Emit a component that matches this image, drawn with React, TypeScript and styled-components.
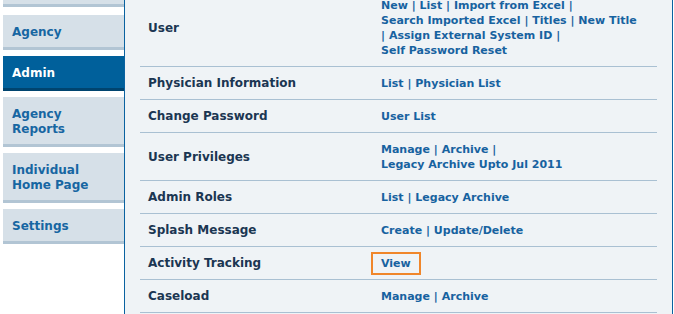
import React from 'react';
import styled, { createGlobalStyle, css } from 'styled-components';

const GlobalStyle = createGlobalStyle`
  html, body {
    margin: 0;
    padding: 0;
    background: #ffffff;
    overflow: hidden;
  }
  body {
    font-family: "DejaVu Sans", Verdana, sans-serif;
  }
`;

const Page = styled.div`
  display: flex;
  align-items: stretch;
  width: 674px;
  height: 314px;
  overflow: hidden;
`;

const Sidebar = styled.nav`
  width: 121px;
  padding-left: 3px;
  flex-shrink: 0;
  display: flex;
  flex-direction: column;
  gap: 6px;
`;

const TabStub = styled.div`
  height: 4px;
  background: #d6e0e8;
  border-bottom: 3px solid #b2c5d4;
  margin-bottom: 2px;
`;

const Tab = styled.a<{ $active?: boolean }>`
  display: block;
  padding: 10px 9px 7px;
  line-height: 15px;
  font-size: 12px;
  font-weight: bold;
  text-decoration: none;
  color: #1766a2;
  background: #d6e0e8;
  border-bottom: 3px solid #b2c5d4;
  ${(p) =>
    p.$active &&
    css`
      color: #ffffff;
      background: #00609b;
      border-bottom-color: #00446f;
    `}
`;

const Main = styled.main`
  width: 517px;
  margin-right: 1px;
  padding: 0 15px;
  background: #eff3f6;
  border-left: 1px solid #0a62a0;
  border-right: 1px solid #0a62a0;
`;

const Rows = styled.div`
  margin-top: -11px;
  display: flex;
  flex-direction: column;
`;

const Row = styled.div`
  display: grid;
  grid-template-columns: 241px 1fr;
  align-items: center;
  padding: 9px 0 8px;
  border-bottom: 1px solid #a9c0d2;
`;

const Label = styled.div`
  padding-left: 8px;
  font-size: 12px;
  font-weight: bold;
  line-height: 15px;
  color: #1b3652;
`;

const Links = styled.div`
  font-size: 11px;
  font-weight: bold;
  line-height: 15px;
  color: #1762a0;
  white-space: pre;
`;

const Line = styled.div``;

const Link = styled.a<{ $focused?: boolean }>`
  color: #1762a0;
  text-decoration: none;
  ${(p) =>
    p.$focused &&
    css`
      display: inline-block;
      margin: -4px -10px;
      padding: 2px 8px;
      border: 2px solid #f0862a;
    `}
`;

const Pipe = styled.span`
  color: #1762a0;
`;

type Item = {
  label: string,
  links: string,
  focused?: string,
};

const tabs = [
  { text: 'Agency' },
  { text: 'Admin', active: true },
  { text: 'Agency\nReports' },
  { text: 'Individual\nHome Page' },
  { text: 'Settings' },
];

const items: Item[] = [
  {
    label: 'User',
    links: 'New | List | Import from Excel |\nSearch Imported Excel | Titles | New Title\n| Assign External System ID |\nSelf Password Reset'
  },
  { label: 'Physician Information', links: 'List | Physician List' },
  { label: 'Change Password', links: 'User List' },
  { label: 'User Privileges', links: 'Manage | Archive |\nLegacy Archive Upto Jul 2011' },
  { label: 'Admin Roles', links: 'List | Legacy Archive' },
  { label: 'Splash Message', links: 'Create | Update/Delete' },
  { label: 'Activity Tracking', links: 'View', focused: 'View' },
  { label: 'Caseload', links: 'Manage | Archive' },
];

const renderLine = (line: string, focused?: string) =>
  line.split('|').map((part, i) => {
    const text = part.trim();
    const lead = part.match(/^\s*/)?.[0] || '';
    const trail = part.match(/\s*$/)?.[0] || '';
    return (
      <React.Fragment key={i}>
        {i > 0 && <Pipe>|</Pipe>}
        {text ? (
          <>
            {lead}
            <Link href='#' $focused={text === focused}>{text}</Link>
            {trail}
          </>
        ) : part}
      </React.Fragment>
    );
  });

export default function App () {
  return (
    <>
      <GlobalStyle />
      <Page>
        <Sidebar>
          <TabStub />
          {tabs.map((tab) => (
            <Tab key={tab.text} href='#' $active={tab.active}>
              {tab.text.split('\n').map((t) => <div key={t}>{t}</div>)}
            </Tab>
          ))}
        </Sidebar>
        <Main>
          <Rows>
            {items.map((item) => (
              <Row key={item.label}>
                <Label>{item.label}</Label>
                <Links>
                  {item.links.split('\n').map((line, i) => (
                    <Line key={i}>{renderLine(line, item.focused)}</Line>
                  ))}
                </Links>
              </Row>
            ))}
          </Rows>
        </Main>
      </Page>
    </>
  );
}
